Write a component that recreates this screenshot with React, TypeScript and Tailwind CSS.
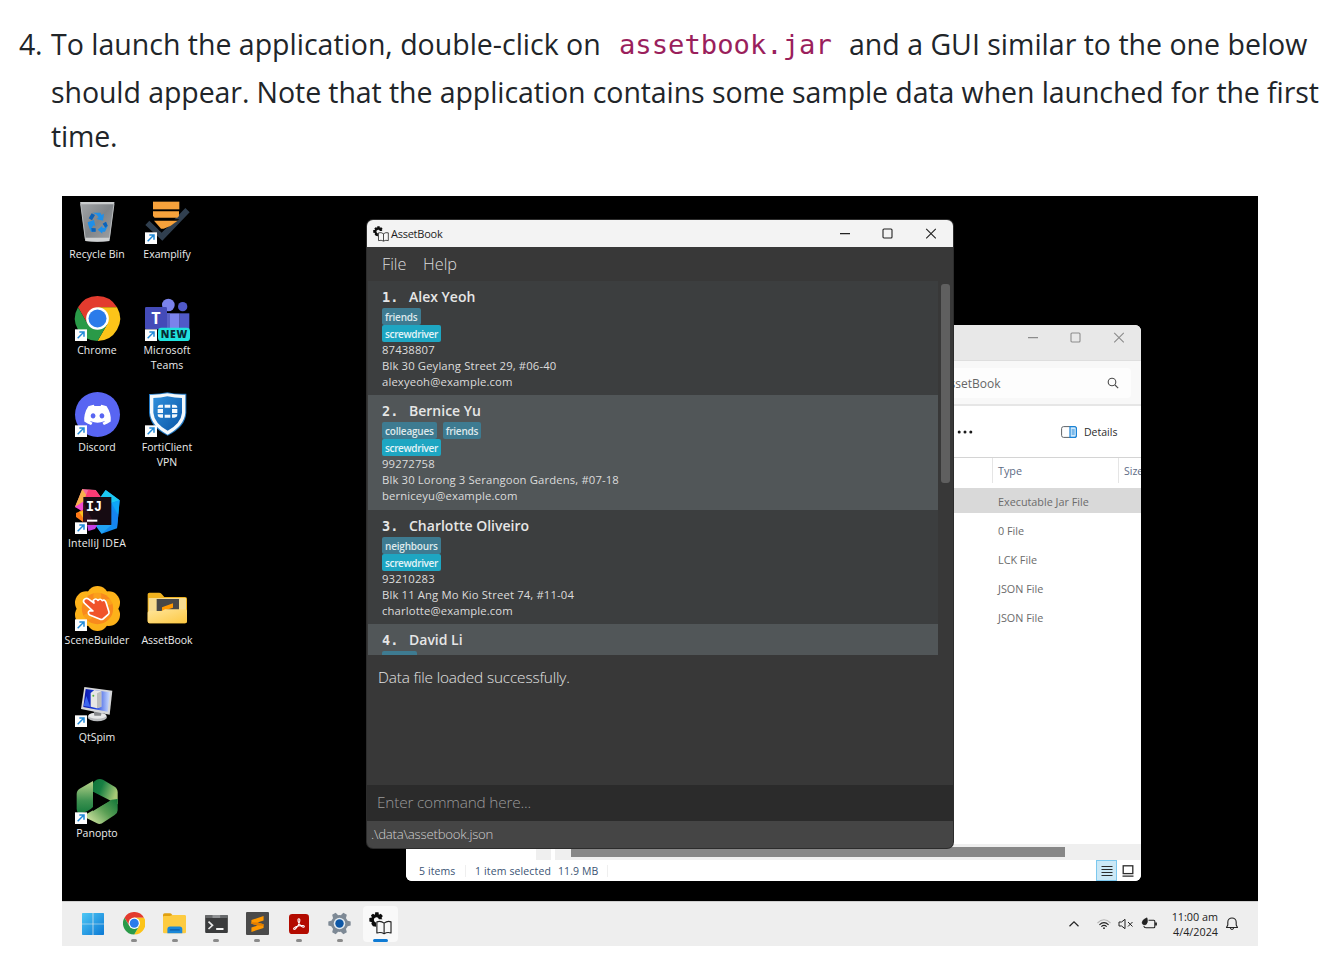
import type { ReactNode } from "react";
import { FaDiscord } from "react-icons/fa";

/* ---------- desktop icons (all drawn on a 135 x 135 board) ---------- */

function Shortcut() {
  return (
    <g>
      <rect x="0" y="100" width="36" height="35" fill="#fdfdfd" />
      <path d="M8 127 L26 109 M13 108 H27 V122" fill="none" stroke="#2089d8" strokeWidth="4.5" />
    </g>
  );
}

function Board({ children, shortcut = true }: { children: ReactNode; shortcut?: boolean }) {
  return (
    <svg viewBox="0 0 135 135" className="block h-[45px] w-[45px] overflow-visible">
      {children}
      {shortcut && <Shortcut />}
    </svg>
  );
}

function ChromeShape() {
  return (
    <g>
      <path d="M9 33.75 A67.5 67.5 0 0 1 126 33.75 L67.5 33.75 L38.3 84.4 Z" fill="#e33b2e" />
      <path d="M126 33.75 A67.5 67.5 0 0 1 67.5 135 L96.7 84.4 L67.5 33.75 Z" fill="#fcc419" />
      <path d="M67.5 135 A67.5 67.5 0 0 1 9 33.75 L38.3 84.4 L96.7 84.4 Z" fill="#2a9a48" />
      <circle cx="67.5" cy="67.5" r="34" fill="#fff" />
      <circle cx="67.5" cy="67.5" r="27" fill="#2b7bea" />
    </g>
  );
}

const RecycleIcon = () => (
  <Board shortcut={false}>
    <defs>
      <linearGradient id="bin" x1="0" y1="0" x2="1" y2="1">
        <stop offset="0" stopColor="#a3a6a8" />
        <stop offset="0.5" stopColor="#808488" />
        <stop offset="1" stopColor="#a2a5a8" />
      </linearGradient>
    </defs>
    <path d="M16 9 L118 9 L103 126 Q67 130 31 126 Z" fill="url(#bin)" />
    <path d="M16 9 H118 L117 16 H17 Z" fill="#c9cccd" />
    <path d="M30 116 H104 L103 126 Q67 130 31 126 Z" fill="#cfd1d2" />
    <path d="M17 14 L31 120 M117 14 L103 120" stroke="#b9bcbe" strokeWidth="3" />
    <path d="M53 41 H76 L80 48 L87 44 L84 65 L65 60 L71 55 L65 47 Z" fill="#1f8fe8" />
    <path d="M50 43 L60 48 L51 64 L41 58 Z" fill="#0c62b8" />
    <path d="M38 70 L57 63 L61 81 L55 79 L50 88 L61 89 V98 H48 Q42 86 40 78 Z" fill="#1f8fe8" />
    <path d="M49 87 L62 88 V98 H50 Z" fill="#0c62b8" />
    <path d="M68 92 L82 80 V86 H90 L84 74 L93 69 L98 82 L90 98 H82 V104 Z" fill="#1f8fe8" />
    <path d="M83 74 L93 68 L98 80 L91 86 Z" fill="#0c62b8" />
  </Board>
);

const ExamplifyIcon = () => (
  <Board>
    <path d="M1 78 L13 65 L50 101 L121 27 L134 40 L52 125 Z" fill="#303f4f" />
    <path d="M24 8 H103 V31 H24 Z" fill="#f7a23b" />
    <path d="M24 37 H102 V51 L97 56 H29 L24 51 Z" fill="#f7a23b" />
    <path d="M24 61 H103 L52 96 H44 Z" fill="#000" />
    <path d="M27 65 H98 L76 81 L56 89 H48 Z" fill="#f7a23b" />
  </Board>
);

const ChromeIcon = () => (
  <Board>
    <ChromeShape />
  </Board>
);

const TeamsIcon = () => (
  <Board>
    <circle cx="113" cy="32" r="14" fill="#5059c9" />
    <circle cx="70" cy="27" r="19" fill="#7b83eb" />
    <path d="M60 52 H104 V100 H60 Z" fill="#7b83eb" />
    <path d="M104 52 H133 V100 H104 Z" fill="#5059c9" />
    <path d="M66 52 H75 V100 H66 Z" fill="#5a62c6" />
    <rect x="0" y="33" width="66" height="67" rx="4" fill="#444bb8" />
    <text x="33" y="84" textAnchor="middle" fontSize="48" fontWeight="700" fill="#fff" fontFamily="Open Sans, sans-serif">
      T
    </text>
    <rect x="39" y="95" width="96" height="40" rx="10" fill="#20e3df" />
    <text x="87" y="126" textAnchor="middle" fontSize="31" fontWeight="800" fill="#082a33" fontFamily="Open Sans, sans-serif" textLength="80">
      NEW
    </text>
  </Board>
);

const DiscordIcon = () => (
  <Board>
    <circle cx="67.5" cy="67.5" r="67.5" fill="#5865f2" />
    <FaDiscord x={24} y={25} width={87} height={84} size={87} color="#fff" />
  </Board>
);

const FortiIcon = () => (
  <Board>
    <defs>
      <linearGradient id="forti" x1="0" y1="0" x2="1" y2="1">
        <stop offset="0" stopColor="#2f8fdc" />
        <stop offset="1" stopColor="#0b56a6" />
      </linearGradient>
    </defs>
    <path d="M12 6 Q40 7 67 1 Q95 7 124 5 V62 Q122 104 68 131 Q14 104 12 62 Z" fill="#2279c4" />
    <path d="M15 8 Q40 9 67 4 Q95 9 121 8 V62 Q118 100 68 128 Q18 100 15 62 Z" fill="#f4f9fd" />
    <path d="M25 18 Q48 18 67 13 Q90 18 111 18 V62 Q108 94 68 116 Q28 94 25 62 Z" fill="url(#forti)" />
    <g fill="#f4f9fd">
      <path d="M38 47 Q38 38 47 38 H54 V47 Z M59 38 H76 V47 H59 Z M81 38 H88 Q97 38 97 47 H81 Z" />
      <path d="M38 51 H54 V63 H38 Z M81 51 H97 V63 H81 Z" />
      <path d="M38 67 H54 V77 H47 Q38 77 38 67 Z M59 68 H76 V77 H59 Z M81 67 H97 Q97 77 88 77 H81 Z" />
    </g>
  </Board>
);

const IdeaIcon = () => (
  <Board>
    <path d="M22 0 L62 3 L78 25 V60 H25 L0 54 Z" fill="#f76c9c" />
    <path d="M22 0 L40 28 L0 54 Z" fill="#f6b04c" />
    <path d="M40 2 L62 4 L78 26 H30 Z" fill="#fb3b74" />
    <path d="M0 54 L25 38 V72 L14 62 Z" fill="#f34bd0" />
    <path d="M3 72 L25 62 V100 L3 84 Z" fill="#ff7a18" />
    <path d="M12 68 L25 66 V88 Z" fill="#ffc021" />
    <path d="M92 3 L134 34 L126 118 L80 134 L60 108 L77 24 Z" fill="#128cf0" />
    <path d="M92 3 L134 34 L109 42 L77 24 Z" fill="#1cc8f2" />
    <path d="M109 42 L134 34 L130 78 Z" fill="#0fa6f6" />
    <path d="M109 60 L130 78 L126 118 L109 106 Z" fill="#1684f0" />
    <path d="M60 106 H112 L98 118 L80 134 Z" fill="#22a4f5" />
    <path d="M36 106 H68 L60 120 L40 126 Z" fill="#c340e4" />
    <rect x="25" y="24" width="84" height="84" fill="#160b12" />
    <path d="M25 40 L60 108 H25 Z" fill="#32101c" />
    <text x="33" y="67" fontSize="45" fontWeight="700" fill="#fff" fontFamily="Liberation Mono, monospace" textLength="48" lengthAdjust="spacingAndGlyphs">
      IJ
    </text>
    <rect x="36" y="92" width="31" height="6" fill="#fff" />
  </Board>
);

const SceneBuilderIcon = () => (
  <Board>
    <g fill="#fdb21a">
      <circle cx="67.5" cy="33" r="33" />
      <circle cx="67.5" cy="102" r="33" />
      <circle cx="34" cy="50" r="34" />
      <circle cx="101" cy="50" r="34" />
      <circle cx="34" cy="86" r="34" />
      <circle cx="101" cy="86" r="34" />
    </g>
    <circle cx="67.5" cy="67.5" r="47" fill="#f98a1d" />
    <g fill="#fdb21a" opacity="0.55">
      <ellipse cx="67" cy="30" rx="12" ry="18" />
      <ellipse cx="100" cy="48" rx="14" ry="9" />
      <ellipse cx="38" cy="92" rx="13" ry="9" />
    </g>
    <path
      d="M27 41 Q34 34 42 40 L57 51 L55 43 Q62 35 69 43 Q76 36 82 44 Q89 39 93 49 L102 78 Q103 83 99 86 L84 99 Q79 102 74 99 L44 87 Q36 80 44 74 L54 75 L29 52 Q23 46 27 41 Z"
      fill="#f0542a"
      stroke="#fff"
      strokeWidth="5"
      strokeLinejoin="round"
    />
  </Board>
);

const FolderIcon = () => (
  <Board shortcut={false}>
    <defs>
      <linearGradient id="folder" x1="0" y1="0" x2="1" y2="1">
        <stop offset="0" stopColor="#ffe59a" />
        <stop offset="1" stopColor="#fdc842" />
      </linearGradient>
    </defs>
    <path d="M8 25 Q8 20 13 20 H42 Q47 20 50 24 L58 33 H120 Q126 33 126 38 V104 Q126 112 118 112 H15 Q8 112 8 104 Z" fill="#f0b21f" />
    <path d="M11 36 H123 V76 H11 Z" fill="#f7dc91" />
    <rect x="35" y="39" width="67" height="46" fill="#474747" />
    <path d="M51 64 L84 52 V65 L60 73 V79 L51 77 Z" fill="#ff9800" />
    <path d="M8 80 Q8 75 13 75 H47 Q52 75 56 72 L60 70 H121 Q126 70 126 75 V106 Q126 112 120 112 H14 Q8 112 8 106 Z" fill="url(#folder)" />
  </Board>
);

const QtSpimIcon = () => (
  <Board>
    <defs>
      <linearGradient id="screen" x1="0" y1="0" x2="1" y2="0">
        <stop offset="0" stopColor="#0a13a8" />
        <stop offset="0.45" stopColor="#1a3fdc" />
        <stop offset="1" stopColor="#cfe0ff" />
      </linearGradient>
    </defs>
    <ellipse cx="67" cy="105" rx="29" ry="13" fill="#b9bbbd" />
    <ellipse cx="67" cy="101" rx="27" ry="9" fill="#e6e7e8" />
    <path d="M55 80 H82 L78 101 H58 Z" fill="#85878a" />
    <path d="M28 15 L112 26 L104 98 L18 81 Z" fill="#d5d6d8" />
    <path d="M32 21 L105 31 L98 89 L25 75 Z" fill="url(#screen)" />
    <path d="M34 42 L46 75 L26 72 Z" fill="#3c67ef" />
    <path d="M47 33 L58 24 L79 28 V74 L66 79 L47 74 Z" fill="#e7e7e5" />
    <path d="M66 34 L79 28 V74 L66 79 Z" fill="#bcbdbd" />
    <circle cx="55" cy="41" r="3" fill="#58b53d" />
  </Board>
);

const PanoptoIcon = () => (
  <Board>
    <defs>
      <linearGradient id="panA" x1="0" y1="0" x2="0" y2="1">
        <stop offset="0" stopColor="#b9d58a" />
        <stop offset="0.6" stopColor="#3f9251" />
        <stop offset="1" stopColor="#157a3c" />
      </linearGradient>
      <linearGradient id="panB" x1="0" y1="0" x2="1" y2="0.4">
        <stop offset="0" stopColor="#0f7338" />
        <stop offset="0.4" stopColor="#187f43" />
        <stop offset="1" stopColor="#a8ca77" />
      </linearGradient>
      <linearGradient id="panC" x1="1" y1="0" x2="0" y2="0.8">
        <stop offset="0" stopColor="#107438" />
        <stop offset="0.5" stopColor="#5b9f55" />
        <stop offset="1" stopColor="#cbe09d" />
      </linearGradient>
    </defs>
    <path d="M5 45 Q5 34 14 29 L54 6 V84 Q40 100 10 104 Q5 96 5 90 Z" fill="url(#panA)" />
    <path d="M54 12 Q66 -4 84 2 L119 23 Q128 29 128 40 V76 L54 38 Z" fill="url(#panB)" />
    <path d="M128 60 V94 Q128 102 119 108 L87 129 Q76 138 66 133 L36 118 V104 L110 62 Z" fill="url(#panC)" />
    <path d="M54 39 L101 67 L54 96 Z" fill="#000" />
  </Board>
);

interface DesktopItem {
  label: ReactNode;
  icon?: ReactNode;
  tracking: string;
}

const desktopItems: DesktopItem[] = [
  { label: "Recycle Bin", icon: <RecycleIcon />, tracking: "tracking-[0.08px]" },
  { label: "Examplify", icon: <ExamplifyIcon />, tracking: "" },
  { label: "Chrome", icon: <ChromeIcon />, tracking: "tracking-[0.05px]" },
  { label: <>Microsoft<br />Teams</>, icon: <TeamsIcon />, tracking: "tracking-[0.08px]" },
  { label: "Discord", icon: <DiscordIcon />, tracking: "" },
  { label: <>FortiClient<br />VPN</>, icon: <FortiIcon />, tracking: "" },
  { label: "IntelliJ IDEA", icon: <IdeaIcon />, tracking: "tracking-[0.2px]" },
  { label: "", tracking: "" },
  { label: "SceneBuilder", icon: <SceneBuilderIcon />, tracking: "tracking-[0.05px]" },
  { label: "AssetBook", icon: <FolderIcon />, tracking: "" },
  { label: "QtSpim", icon: <QtSpimIcon />, tracking: "" },
  { label: "", tracking: "" },
  { label: "Panopto", icon: <PanoptoIcon />, tracking: "" },
];

/* ---------- shared glyphs ---------- */

function GearBook({ className }: { className: string }) {
  return (
    <svg viewBox="0 0 70 70" className={className}>
      <path
        d="M19 1 H29 L30 8 L36 5 L42 12 L38 18 L41 22 H30 Q28 15 22 16 Q14 18 15 25 Q16 31 21 32 L22 45 L12 43 L7 36 L9 31 L1 29 V18 L9 17 L6 10 L12 5 L18 8 Z"
        fill="#0c0c0c"
      />
      <path d="M24 30 Q36 26 46 34 Q56 26 67 30 V64 Q56 60 46 66 Q36 60 24 64 Z" fill="#f7f7f7" stroke="#222" strokeWidth="3.5" strokeLinejoin="round" />
      <path d="M46 34 V66" stroke="#222" strokeWidth="3.5" />
    </svg>
  );
}

function CaptionButtons({ color }: { color: string }) {
  return (
    <div className={`flex items-center ${color}`}>
      <svg viewBox="0 0 12 12" className="mr-[31px] h-3 w-3" fill="none" stroke="currentColor" strokeWidth="1.1">
        <path d="M1 5.6 H11" />
      </svg>
      <svg viewBox="0 0 12 12" className="mr-[31px] h-3 w-3" fill="none" stroke="currentColor" strokeWidth="1.1">
        <rect x="1" y="1" width="9" height="9" rx="1" />
      </svg>
      <svg viewBox="0 0 12 12" className="h-3 w-3" fill="none" stroke="currentColor" strokeWidth="1.1">
        <path d="M1.2 0.8 L10.8 10.4 M10.8 0.8 L1.2 10.4" />
      </svg>
    </div>
  );
}

/* ---------- explorer window ---------- */

const fileTypes = ["Executable Jar File", "0 File", "LCK File", "JSON File", "JSON File"];

function ExplorerWindow() {
  return (
    <div className="absolute left-[344px] top-[129px] flex h-[556px] w-[735px] flex-col overflow-hidden rounded-[6px] bg-white text-[10.5px]">
      <div className="flex h-[36px] shrink-0 items-start justify-end border-b border-[#dedede] bg-[#e8e8e8] pr-4 pt-[7px]">
        <CaptionButtons color="text-[#8c8c8c]" />
      </div>
      <div className="flex h-[45px] shrink-0 items-center justify-end border-b-2 border-[#e6e6e6] bg-[#f8f8f8] pr-[10px]">
        <div className="flex h-[30px] w-[240px] items-center justify-between rounded-[4px] bg-[#fdfdfd] pl-[51px] pr-3 text-[12px] text-[#666]">
          <span className="whitespace-nowrap pt-[3px]">AssetBook</span>
          <svg viewBox="0 0 12 12" className="h-3 w-3" fill="none" stroke="#4a4a4a" strokeWidth="1.1">
            <circle cx="5" cy="5" r="3.8" />
            <path d="M8 8 L11.2 11.2" />
          </svg>
        </div>
      </div>
      <div className="flex h-[52px] shrink-0 items-center justify-end border-b border-[#d4d4d4] pr-6 text-[#2c2c2c]">
        <svg viewBox="0 0 16 4" className="mr-[88px] h-1 w-4" fill="#1a1a1a">
          <circle cx="2.2" cy="2" r="1.5" />
          <circle cx="8" cy="2" r="1.5" />
          <circle cx="13.8" cy="2" r="1.5" />
        </svg>
        <svg viewBox="0 0 16 12" className="mr-[7px] h-3 w-4" fill="none">
          <rect x="0.6" y="0.6" width="14.8" height="10.8" rx="2" stroke="#5f6468" />
          <path d="M9 0.6 H13.4 A2 2 0 0 1 15.4 2.6 V9.4 A2 2 0 0 1 13.4 11.4 H9 Z" fill="#cfe8fb" stroke="#1a83d6" strokeWidth="1.2" />
          <path d="M10.7 4 H13.7 M10.7 6 H13.7 M10.7 8 H13.7" stroke="#1a83d6" strokeWidth="0.9" />
        </svg>
        <span className="w-[33px] whitespace-nowrap pt-[2px]">Details</span>
      </div>
      <div className="flex h-[30px] shrink-0 justify-end text-[#5d6b85]">
        <div className="h-[25px] w-[126px] border-l border-[#e5e5e5] pl-[5px] text-[10.8px] leading-[26px]">Type</div>
        <div className="h-[25px] w-[23px] overflow-hidden border-l border-[#e5e5e5] pl-[5px] leading-[26px]">Size</div>
      </div>
      <div className="flex flex-col gap-[4px] text-[10.8px] text-[#6b6b6b]">
        {fileTypes.map((type, i) => (
          <div key={i} className={`flex h-[25px] items-center pl-[592px] pt-[4px] ${i === 0 ? "bg-[#d9d9d9]" : ""}`}>
            {type}
          </div>
        ))}
      </div>
      <div className="mt-auto flex h-4 shrink-0 bg-[#efefef]">
        <div className="w-[130px] bg-white" />
        <div className="w-[15px]" />
        <div className="w-[4px] bg-white" />
        <div className="ml-4 mt-[3px] h-[10px] w-[494px] bg-[#878787]" />
      </div>
      <div className="flex h-[21px] shrink-0 items-center bg-white pl-[13px] text-[#3b5373]">
        <span className="w-[46px] whitespace-nowrap pt-[2px] tracking-[0.1px]">5 items</span>
        <span className="mr-[9px] h-3 w-px bg-[#efefef]" />
        <span className="w-[83px] whitespace-nowrap pt-[2px] tracking-[0.13px]">1 item selected</span>
        <span className="whitespace-nowrap pt-[2px] tracking-[0.1px]">11.9 MB</span>
        <span className="ml-[9px] h-3 w-px bg-[#efefef]" />
        <div className="ml-auto mr-[3px] flex items-center">
          <div className="flex h-[21px] w-[21px] items-center justify-center border border-[#7cc8ee] bg-[#cbe8f6]">
            <svg viewBox="0 0 12 12" className="h-3 w-3" fill="none" stroke="#2b2b2b" strokeWidth="1.1">
              <path d="M0.5 1.5 H11.5 M0.5 4.5 H11.5 M0.5 7.5 H11.5 M0.5 10.5 H11.5" />
            </svg>
          </div>
          <div className="flex h-[21px] w-[21px] items-center justify-center">
            <svg viewBox="0 0 12 12" className="h-3 w-3" fill="none" stroke="#2b2b2b" strokeWidth="1.3">
              <rect x="1.2" y="0.8" width="9.6" height="7.8" />
              <path d="M0.5 11.2 H11.5" />
            </svg>
          </div>
        </div>
      </div>
    </div>
  );
}

/* ---------- AssetBook window ---------- */

interface Person {
  name: string;
  tags: string[];
  phone?: string;
  address?: string;
  email?: string;
}

const people: Person[] = [
  { name: "Alex Yeoh", tags: ["friends"], phone: "87438807", address: "Blk 30 Geylang Street 29, #06-40", email: "alexyeoh@example.com" },
  { name: "Bernice Yu", tags: ["colleagues", "friends"], phone: "99272758", address: "Blk 30 Lorong 3 Serangoon Gardens, #07-18", email: "berniceyu@example.com" },
  { name: "Charlotte Oliveiro", tags: ["neighbours"], phone: "93210283", address: "Blk 11 Ang Mo Kio Street 74, #11-04", email: "charlotte@example.com" },
  { name: "David Li", tags: [] },
];

function PersonCard({ person, index }: { person: Person; index: number }) {
  return (
    <div className={`h-[114.3px] shrink-0 pl-[14px] pt-[6px] ${index % 2 ? "bg-[#515658]" : "bg-[#3c3e3f]"}`}>
      <div className="mb-[2px] flex h-[19px] items-center whitespace-nowrap text-[14px] font-semibold text-[#e6e6e6]">
        <span className="w-[27px] pt-[2px] font-['DejaVu_Sans_Mono',monospace] text-[13.5px] font-bold leading-[17px]">{index + 1}.</span>
        <span>{person.name}</span>
      </div>
      {person.phone ? (
        <>
          <div className="flex h-[17px] gap-[6px] text-[10px] font-semibold leading-[18px] tracking-[-0.2px] text-[#dfe9ec]">
            {person.tags.map((tag) => (
              <span key={tag} className="h-[17px] rounded-[2px] bg-[#3e7b91] px-[3px]">{tag}</span>
            ))}
          </div>
          <div className="flex h-[17px] text-[10px] font-semibold leading-[18px] tracking-[-0.35px] text-[#e4f4f8]">
            <span className="h-[17px] rounded-[2px] bg-[#1ea6c2] px-[3px]">screwdriver</span>
          </div>
          <div className="whitespace-nowrap text-[11.3px] leading-[16px] tracking-[0.13px] text-[#dcdcdc]">
            <p>{person.phone}</p>
            <p>{person.address}</p>
            <p>{person.email}</p>
          </div>
        </>
      ) : (
        <div className="h-[17px] w-[35px] rounded-[2px] bg-[#3e7b91]" />
      )}
    </div>
  );
}

function AssetBookWindow() {
  return (
    <div className="absolute left-[305px] top-[24px] flex h-[628px] w-[586px] flex-col overflow-hidden rounded-[6px] bg-[#383838] shadow-[0_0_0_1px_#2c2c2c]">
      <div className="flex h-[27px] shrink-0 items-center bg-[#f3f3f3] pl-[6px] pr-4">
        <GearBook className="h-4 w-4" />
        <span className="ml-[2px] whitespace-nowrap pt-[2px] text-[11px] tracking-[-0.25px] text-[#1c1c1c]">AssetBook</span>
        <div className="ml-auto">
          <CaptionButtons color="text-[#222]" />
        </div>
      </div>
      <div className="flex h-[34px] shrink-0 items-center pl-[15px] text-[16.3px] font-light text-[#dcdcdc]">
        <span className="w-[41px]">File</span>
        <span>Help</span>
      </div>
      <div className="flex h-[374px] shrink-0 overflow-hidden pl-px">
        <div className="flex h-[374px] w-[570px] flex-col overflow-hidden">
          {people.map((p, i) => (
            <PersonCard key={p.name} person={p} index={i} />
          ))}
        </div>
        <div className="ml-[3px] mt-[3px] h-[199px] w-[9px] rounded-[3px] bg-[#5f5f5f]" />
      </div>
      <div className="h-[130px] shrink-0 pl-[11px] pt-[12px] text-[15.4px] font-light leading-[22px] tracking-[-0.17px] text-[#e2e2e2]">
        Data file loaded successfully.
      </div>
      <div className="flex h-[36px] shrink-0 items-center bg-[#2b2b2b] pl-[10px] text-[15.4px] font-light tracking-[-0.2px] text-[#9a9a9a]">
        Enter command here...
      </div>
      <div className="flex h-[27px] shrink-0 items-center bg-[#454545] pl-[4px] text-[13.2px] font-light tracking-[-0.22px] text-[#d0d0d0]">
        .\data\assetbook.json
      </div>
    </div>
  );
}

/* ---------- taskbar ---------- */

const taskIcons: ReactNode[] = [
  <svg viewBox="0 0 66 66" className="h-[22px] w-[22px]">
    <defs>
      <linearGradient id="win" x1="0" y1="0" x2="1" y2="1">
        <stop offset="0" stopColor="#4fc8f5" />
        <stop offset="1" stopColor="#0b78d4" />
      </linearGradient>
    </defs>
    <path d="M0 2 Q0 0 2 0 H32 V32 H0 Z M34 0 H64 Q66 0 66 2 V32 H34 Z M0 34 H32 V66 H2 Q0 66 0 64 Z M34 34 H66 V64 Q66 66 64 66 H34 Z" fill="url(#win)" />
  </svg>,
  <svg viewBox="0 0 135 135" className="h-[22.5px] w-[22.5px]">
    <ChromeShape />
  </svg>,
  <svg viewBox="0 0 68 62" className="h-[21px] w-[23px]">
    <path d="M0 6 Q0 1 5 1 H20 Q24 1 27 5 L29 8 H63 Q67 8 67 12 V20 H0 Z" fill="#e0a010" />
    <path d="M0 12 Q0 9 3 9 H20 L28 6 H64 Q68 6 68 10 V56 Q68 60 64 60 H4 Q0 60 0 56 Z" fill="#fdcb40" />
    <path d="M13 60 V48 Q13 40 21 40 H49 Q57 40 57 48 V60 Z" fill="#1a87d8" />
    <path d="M22 50 H48" stroke="#0d5ca5" strokeWidth="4" strokeLinecap="round" />
  </svg>,
  <svg viewBox="0 0 68 54" className="h-[18px] w-[23px]">
    <rect width="68" height="54" rx="3" fill="#3a3b3c" />
    <path d="M0 3 Q0 0 3 0 H65 Q68 0 68 3 V9 H0 Z" fill="#686a6c" />
    <path d="M22 0 H45 V9 H22 Z" fill="#909294" />
    <path d="M10 20 L22 31 L10 42" fill="none" stroke="#e8e8e8" strokeWidth="5" />
    <path d="M33 42 H55" stroke="#f5f5f5" strokeWidth="6" />
  </svg>,
  <svg viewBox="0 0 68 68" className="h-[23px] w-[23px]">
    <rect width="68" height="68" rx="3" fill="#4a4a4a" />
    <path d="M16 24 L52 12 V25 L34 31 L52 36 V47 L16 59 V46 L34 40 L16 35 Z" fill="#ff9800" />
    <path d="M34 31 L52 36 V41 L34 40 L16 35 V30 Z" fill="#e27d00" />
  </svg>,
  <svg viewBox="0 0 60 60" className="h-5 w-5">
    <rect width="60" height="60" rx="10" fill="#b30b00" />
    <path d="M29 14 Q34 14 32 23 Q29 36 19 45 Q13 48 14 43 Q18 37 32 35 Q46 33 46 38 Q44 42 36 36 Q26 26 27 17 Q27 14 29 14 Z" fill="none" stroke="#fff" strokeWidth="3.2" />
  </svg>,
  <svg viewBox="0 0 68 68" className="h-[23px] w-[23px]">
    <g fill="#7d8995">
      <circle cx="34" cy="34" r="25" />
      <path d="M25 12 L28 1 H40 L43 12 Z M25 56 L28 67 H40 L43 56 Z" transform="rotate(30 34 34)" />
      <path d="M25 12 L28 1 H40 L43 12 Z M25 56 L28 67 H40 L43 56 Z" transform="rotate(90 34 34)" />
      <path d="M25 12 L28 1 H40 L43 12 Z M25 56 L28 67 H40 L43 56 Z" transform="rotate(150 34 34)" />
    </g>
    <circle cx="34" cy="34" r="17" fill="#e3eaf0" />
    <circle cx="34" cy="34" r="12.5" fill="#0d57a6" />
  </svg>,
  <GearBook className="h-[23px] w-[23px]" />,
];

function Taskbar() {
  return (
    <div className="absolute bottom-0 left-0 flex h-[45px] w-full items-center border-t border-[#cfcfcf] bg-[#eeeeee] pl-[10px]">
      {taskIcons.map((icon, i) => {
        const active = i === taskIcons.length - 1;
        return (
          <div key={i} className="flex w-[41.2px] justify-center">
            <div className={`relative flex h-[36px] w-[35px] items-center justify-center rounded-[4px] pb-px ${active ? "bg-[#f9f9f9]" : ""}`}>
              {icon}
              {i > 0 && (
                <span className={`absolute bottom-0 h-[3px] rounded-full ${active ? "w-[15px] bg-[#0f7bd4]" : "w-[6px] bg-[#8a8a8a]"}`} />
              )}
            </div>
          </div>
        );
      })}
      <div className="ml-auto flex items-center pr-[19px] text-[#222]">
        <svg viewBox="0 0 12 12" className="mr-[16px] h-3 w-3" fill="none" stroke="currentColor" strokeWidth="1.2">
          <path d="M1.5 8.2 L6 3.8 L10.5 8.2" />
        </svg>
        <svg viewBox="0 0 16 12" className="mr-[6px] h-3 w-4" fill="none" stroke="currentColor" strokeWidth="1.1">
          <path d="M1.5 5 Q8 -1.5 14.5 5" stroke="#b5b5b5" />
          <path d="M3.4 6.8 Q8 2.4 12.6 6.8" />
          <path d="M5.3 8.7 Q8 6.2 10.7 8.7" />
          <circle cx="8" cy="10.2" r="0.9" fill="currentColor" stroke="none" />
        </svg>
        <svg viewBox="0 0 16 12" className="mr-[7px] h-3 w-4" fill="none" stroke="currentColor" strokeWidth="1">
          <path d="M1 4 H3.6 L7 1.3 V10.7 L3.6 8 H1 Z" strokeLinejoin="round" />
          <path d="M10 4 L14.5 8.5 M14.5 4 L10 8.5" />
        </svg>
        <svg viewBox="0 0 16 14" className="mr-[14px] h-[14px] w-4" fill="none" stroke="currentColor" strokeWidth="1.1">
          <path d="M7.5 3.2 H12.8 Q13.8 3.2 13.8 4.2 V9.8 Q13.8 10.8 12.8 10.8 H5 Q3.2 10.8 2.8 9" />
          <path d="M15 5.5 V8.5" strokeWidth="1.8" />
          <path d="M6 0.8 Q7.4 5.6 5 7.6 Q2 8.8 1 6 Q1 2.8 6 0.8 Z" fill="currentColor" strokeWidth="0.6" />
        </svg>
        <div className="w-[47px] whitespace-nowrap text-right text-[10.8px] leading-[15px]">
          <p>11:00 am</p>
          <p>4/4/2024</p>
        </div>
        <svg viewBox="0 0 14 14" className="ml-[7px] h-[14px] w-[14px]" fill="none" stroke="currentColor" strokeWidth="1.1">
          <path d="M1.5 10.5 L2.8 8 V5.2 A4.2 4.2 0 0 1 11.2 5.2 V8 L12.5 10.5 Z" strokeLinejoin="round" />
          <path d="M5.3 11 Q7 14 8.7 11" />
        </svg>
      </div>
    </div>
  );
}

export default function App() {
  return (
    <div className="h-[979px] w-[1344px] overflow-hidden bg-white font-['Open_Sans','Noto_Sans',sans-serif]">
      <div className="flex h-[196px] pl-[19px] pt-[22px] text-[28.5px] leading-[44px] text-[#212529]">
        <span className="w-[32px] shrink-0 tracking-[-0.3px]">4.</span>
        <div className="whitespace-nowrap">
          <p className="flex h-[48px]">
            <span className="w-[568px]">To launch the application, double-click on</span>
            <code className="w-[230px] pt-px font-['DejaVu_Sans_Mono',monospace] text-[27.2px] text-[#9a1f5c]">assetbook.jar</code>
            <span>and a GUI similar to the one below</span>
          </p>
          <p className="tracking-[-0.08px]">should appear. Note that the application contains some sample data when launched for the first</p>
          <p className="tracking-[-0.2px]">time.</p>
        </div>
      </div>
      <div className="relative ml-[62px] h-[750px] w-[1196px] overflow-hidden bg-black">
        <div className="grid w-[140px] auto-rows-[96.6px] grid-cols-2 pt-[3.2px]">
          {desktopItems.map((item, i) => (
            <div key={i} className="flex flex-col items-center gap-[2.4px]">
              {item.icon}
              <span className={`whitespace-nowrap text-center text-[10.5px] leading-[15px] text-[#ececec] ${item.tracking}`}>{item.label}</span>
            </div>
          ))}
        </div>
        <ExplorerWindow />
        <AssetBookWindow />
        <Taskbar />
      </div>
    </div>
  );
}
